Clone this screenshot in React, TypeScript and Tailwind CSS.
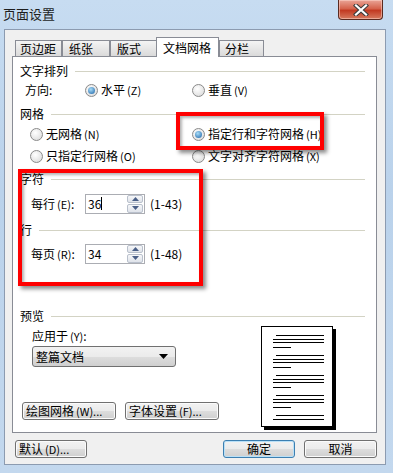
import React from "react";

const Radio = ({ checked }: { checked?: boolean }) => (
  <span className="w-[13px] h-[13px] rounded-full border border-[#8a8a8a] bg-[radial-gradient(circle_at_40%_35%,#ffffff,#d6d6d6)] flex items-center justify-center shrink-0">
    {checked && (
      <span className="w-[7px] h-[7px] rounded-full bg-[radial-gradient(circle_at_40%_35%,#a8dcf7,#1b62a6)]" />
    )}
  </span>
);

const Opt = ({ text, mn, checked }: { text: string; mn: string; checked?: boolean }) => (
  <div className="flex items-center gap-[3px]">
    <Radio checked={checked} />
    <span>
      {text}
      <span className="ml-[2px] text-[11px]">({mn})</span>
    </span>
  </div>
);

const Group = ({ title, cls }: { title: string; cls: string }) => (
  <div className={`h-[16px] flex items-center gap-[7px] ${cls}`}>
    <span>{title}</span>
    <div className="flex-1 h-px bg-[#d3d3c4]" />
  </div>
);

const Arrow = ({ up }: { up?: boolean }) => (
  <svg width="7" height="4" viewBox="0 0 7 4">
    <path d={up ? "M0 4 L3.5 0 L7 4 Z" : "M0 0 L3.5 4 L7 0 Z"} fill="#4a5f87" />
  </svg>
);

const Spin = ({ value, caret }: { value: string; caret?: boolean }) => (
  <div className="w-[60px] h-[20px] border border-[#abadb3] bg-white flex items-center">
    <span className="flex-1 pl-[2px] flex items-center">
      {value}
      {caret && <span className="w-px h-[13px] bg-black" />}
    </span>
    <div className="w-[16px] h-[18px] mr-px flex flex-col gap-px">
      <div className="flex-1 border border-[#b9c0cc] rounded-[2px] bg-[linear-gradient(#f6f7f9,#dfe3ea)] flex items-center justify-center">
        <Arrow up />
      </div>
      <div className="flex-1 border border-[#b9c0cc] rounded-[2px] bg-[linear-gradient(#f6f7f9,#dfe3ea)] flex items-center justify-center">
        <Arrow />
      </div>
    </div>
  </div>
);

const Btn = ({ label, w, def }: { label: React.ReactNode; w: string; def?: boolean }) => (
  <div
    className={`${w} h-[18px] rounded-[3px] border flex items-center ${
      def
        ? "border-[#3c7fb1] shadow-[inset_0_0_0_1px_#b9e0f7]"
        : "border-[#707070] shadow-[inset_0_0_0_1px_#fbfbfb]"
    } bg-[linear-gradient(#f2f2f2_0%,#ebebeb_50%,#dddddd_51%,#cfcfcf_100%)]`}
  >
    {label}
  </div>
);

const PageLines = ({ n }: { n: number }) => (
  <div className="flex flex-col h-[20px] shrink-0">
    <div className="h-px w-[48px] ml-[14px] bg-black" />
    {n > 1 && <div className="h-px w-[51px] ml-[11px] bg-black mt-[3px]" />}
    {n > 2 && <div className="h-px w-[51px] ml-[11px] bg-black mt-[2px]" />}
    {n > 3 && <div className="h-px w-[18px] ml-[11px] bg-black mt-[4px]" />}
  </div>
);

export default function App() {
  const tabs = "h-[16px] border border-b-0 border-[#898c95] bg-[linear-gradient(#f4f4f4,#dadada)] flex items-center";
  return (
    <div className="relative w-[393px] h-[473px] overflow-hidden bg-[linear-gradient(180deg,#c7dcf1,#bad2eb_40%,#c3d8ee)] font-['Noto_Sans_CJK_SC','Noto_Sans',sans-serif] text-[12px] leading-none text-black">
      {/* title bar */}
      <div className="h-[29px] flex items-start">
        <span className="ml-[3px] mt-[7px] text-[13px] text-[#1e1e1e]">页面设置</span>
        <div className="ml-auto mr-[10px] w-[45px] h-[20px] rounded-b-[4px] border border-t-0 border-[#5a2a20] bg-[linear-gradient(#eaa597,#d5634c_45%,#c23a22_55%,#d77a5f)] shadow-[inset_0_0_0_1px_rgba(255,220,210,0.5)] flex items-center justify-center">
          <svg width="16" height="12" viewBox="0 0 16 12">
            <path d="M3 1.5 L13 10.5 M13 1.5 L3 10.5" stroke="#3b3b3b" strokeWidth="4.2" strokeLinecap="square" />
            <path d="M3 1.5 L13 10.5 M13 1.5 L3 10.5" stroke="#ffffff" strokeWidth="2.2" strokeLinecap="square" />
          </svg>
        </div>
      </div>

      {/* client area */}
      <div className="ml-[4px] w-[382px] h-[436px] border border-[#8c9bb0] bg-[#f0f0f0] pt-[7px] pl-[7px] pr-[7px] flex flex-col">
        <div className="h-[19px] flex items-end pl-[3px]">
          <div className={`${tabs} w-[47px] pl-[4px]`}>页边距</div>
          <div className={`${tabs} w-[48px] pl-[6px]`}>纸张</div>
          <div className={`${tabs} w-[48px] pl-[6px]`}>版式</div>
          <div className="relative z-10 -ml-[2px] -mb-px h-[20px] w-[63px] border border-b-0 border-[#898c95] bg-white pl-[6px] flex items-center">
            文档网格
          </div>
          <div className={`${tabs} w-[45px] pl-[5px]`}>分栏</div>
        </div>

        <div className="w-[365px] h-[377px] border border-[#898c95] bg-white pl-[7px] pr-[11px] flex flex-col">
          <Group title="文字排列" cls="mt-[6px]" />
          <div className="mt-[3px] h-[16px] flex items-center pl-[5px]">
            <span className="w-[60px]">方向:</span>
            <div className="w-[107px]">
              <Opt text="水平" mn="Z" checked />
            </div>
            <Opt text="垂直" mn="V" />
          </div>

          <Group title="网格" cls="mt-[8px]" />
          <div className="mt-[4px] h-[16px] flex items-center pl-[10px]">
            <div className="w-[162px]">
              <Opt text="无网格" mn="N" />
            </div>
            <Opt text="指定行和字符网格" mn="H" checked />
          </div>
          <div className="mt-[6px] h-[16px] flex items-center pl-[10px]">
            <div className="w-[162px]">
              <Opt text="只指定行网格" mn="O" />
            </div>
            <Opt text="文字对齐字符网格" mn="X" />
          </div>

          <Group title="字符" cls="mt-[7px]" />
          <div className="mt-[6px] h-[21px] flex items-center pl-[11px]">
            <span className="w-[54px]">
              每行<span className="ml-[2px] text-[11px]">(E)</span>:
            </span>
            <Spin value="36" caret />
            <span className="ml-[5px]">(1-43)</span>
          </div>

          <Group title="行" cls="mt-[8px]" />
          <div className="mt-[5px] h-[21px] flex items-center pl-[11px]">
            <span className="w-[54px]">
              每页<span className="ml-[2px] text-[11px]">(R)</span>:
            </span>
            <Spin value="34" />
            <span className="ml-[5px]">(1-48)</span>
          </div>

          <Group title="预览" cls="mt-[44px]" />
          <div className="flex">
            <div className="w-[241px] flex flex-col pl-[12px]">
              <div className="mt-[4px] h-[16px] flex items-center">
                应用于<span className="ml-[2px] text-[11px]">(Y)</span>:
              </div>
              <div className="mt-[2px] w-[144px] h-[21px] rounded-[3px] border border-[#707070] bg-[linear-gradient(#f2f2f2_0%,#ebebeb_50%,#dddddd_51%,#cfcfcf_100%)] flex items-center pl-[3px] pr-[7px]">
                <span className="flex-1">整篇文档</span>
                <svg width="9" height="5" viewBox="0 0 9 5">
                  <path d="M0 0 L9 0 L4.5 5 Z" fill="#000" />
                </svg>
              </div>
              <div className="mt-[35px] -ml-[10px] flex gap-[9px]">
                <Btn w="w-[94px]" label={<span className="pl-[3px]">绘图网格<span className="ml-[2px] text-[11px]">(W)...</span></span>} />
                <Btn w="w-[94px]" label={<span className="pl-[3px]">字体设置<span className="ml-[2px] text-[11px]">(F)...</span></span>} />
              </div>
            </div>
            <div className="mt-[2px] w-[72px] h-[101px] border border-black bg-white shadow-[3px_3px_0_#000] pt-[8px] flex flex-col overflow-hidden">
              <PageLines n={4} />
              <PageLines n={4} />
              <PageLines n={4} />
              <PageLines n={4} />
              <PageLines n={2} />
            </div>
          </div>
        </div>

        <div className="mt-[7px] flex pl-[3px]">
          <Btn w="w-[72px]" label={<span className="pl-[3px]">默认<span className="ml-[2px] text-[11px]">(D)...</span></span>} />
          <div className="ml-auto flex gap-[9px] mr-[1px]">
            <Btn w="w-[72px]" def label={<span className="w-full text-center">确定</span>} />
            <Btn w="w-[73px]" label={<span className="w-full text-center">取消</span>} />
          </div>
        </div>
      </div>

      {/* annotation boxes */}
      <div className="absolute left-[176px] top-[112px] w-[148px] h-[38px] border-4 border-[#ff0000] shadow-[3px_3px_4px_rgba(0,0,0,0.45),inset_2px_2px_3px_rgba(0,0,0,0.3)]" />
      <div className="absolute left-[18px] top-[169px] w-[185px] h-[117px] border-4 border-[#ff0000] shadow-[3px_3px_4px_rgba(0,0,0,0.45),inset_2px_2px_3px_rgba(0,0,0,0.3)]" />
    </div>
  );
}
